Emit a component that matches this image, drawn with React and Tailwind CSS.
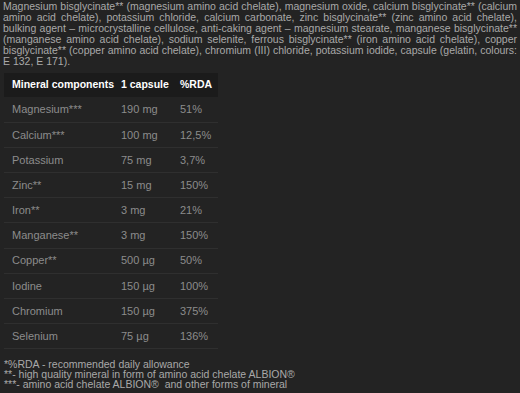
import React from 'react';

const INTRO = [
  'Magnesium bisglycinate** (magnesium amino acid chelate), magnesium oxide, calcium bisglycinate** (calcium',
  'amino acid chelate),  potassium chloride, calcium carbonate, zinc bisglycinate** (zinc amino acid chelate),',
  'bulking agent  – microcrystalline cellulose, anti-caking agent – magnesium stearate, manganese bisglycinate**',
  '(manganese amino acid chelate), sodium selenite, ferrous bisglycinate** (iron amino acid chelate), copper',
  'bisglycinate** (copper amino acid chelate), chromium (III) chloride, potassium iodide, capsule (gelatin, colours:',
];

const ROWS = [
  ['Magnesium***', '190 mg', '51%'],
  ['Calcium***', '100 mg', '12,5%'],
  ['Potassium', '75 mg', '3,7%'],
  ['Zinc**', '15 mg', '150%'],
  ['Iron**', '3 mg', '21%'],
  ['Manganese**', '3 mg', '150%'],
  ['Copper**', '500 µg', '50%'],
  ['Iodine', '150 µg', '100%'],
  ['Chromium', '150 µg', '375%'],
  ['Selenium', '75 µg', '136%'],
];

export default function App() {
  return (
    <div className="w-[520px] h-[393px] overflow-hidden bg-[#232323] text-[#a9a9a9] font-['Liberation_Sans',Arial,sans-serif]">
      <div className="px-[3px] pt-[1px] text-[10.5px] leading-[11px]">
        {INTRO.map((line) => (
          <div key={line} className="whitespace-nowrap text-justify [text-align-last:justify]">
            {line}
          </div>
        ))}
        <div>E 132, E 171).</div>
      </div>

      <table className="ml-[4px] mt-[6px] w-[214px] table-fixed border-collapse text-[11px]">
        <colgroup>
          <col className="w-[117px]" />
          <col className="w-[59px]" />
          <col />
        </colgroup>
        <thead>
          <tr className="bg-[#1b1b1b] h-[24px] text-[10.5px]">
            <th className="pl-[8px] text-left font-bold text-white whitespace-nowrap">Mineral components</th>
            <th className="text-left font-bold text-white whitespace-nowrap">1 capsule</th>
            <th className="text-left font-bold text-white whitespace-nowrap">%RDA</th>
          </tr>
        </thead>
        <tbody>
          {ROWS.map(([name, amt, rda]) => (
            <tr key={name} className="h-[25.2px] border-b border-[#2f2f2f] text-[#8c8c8c]">
              <td className="pl-[8px]">{name}</td>
              <td>{amt}</td>
              <td>{rda}</td>
            </tr>
          ))}
        </tbody>
      </table>

      <div className="mt-[10px] pl-[4px] text-[10.5px] leading-[10px]">
        <div>*%RDA - recommended daily allowance</div>
        <div>**- high quality mineral in form of amino acid chelate ALBION®</div>
        <div>***- amino acid chelate ALBION®&nbsp; and other forms of mineral</div>
      </div>
    </div>
  );
}
